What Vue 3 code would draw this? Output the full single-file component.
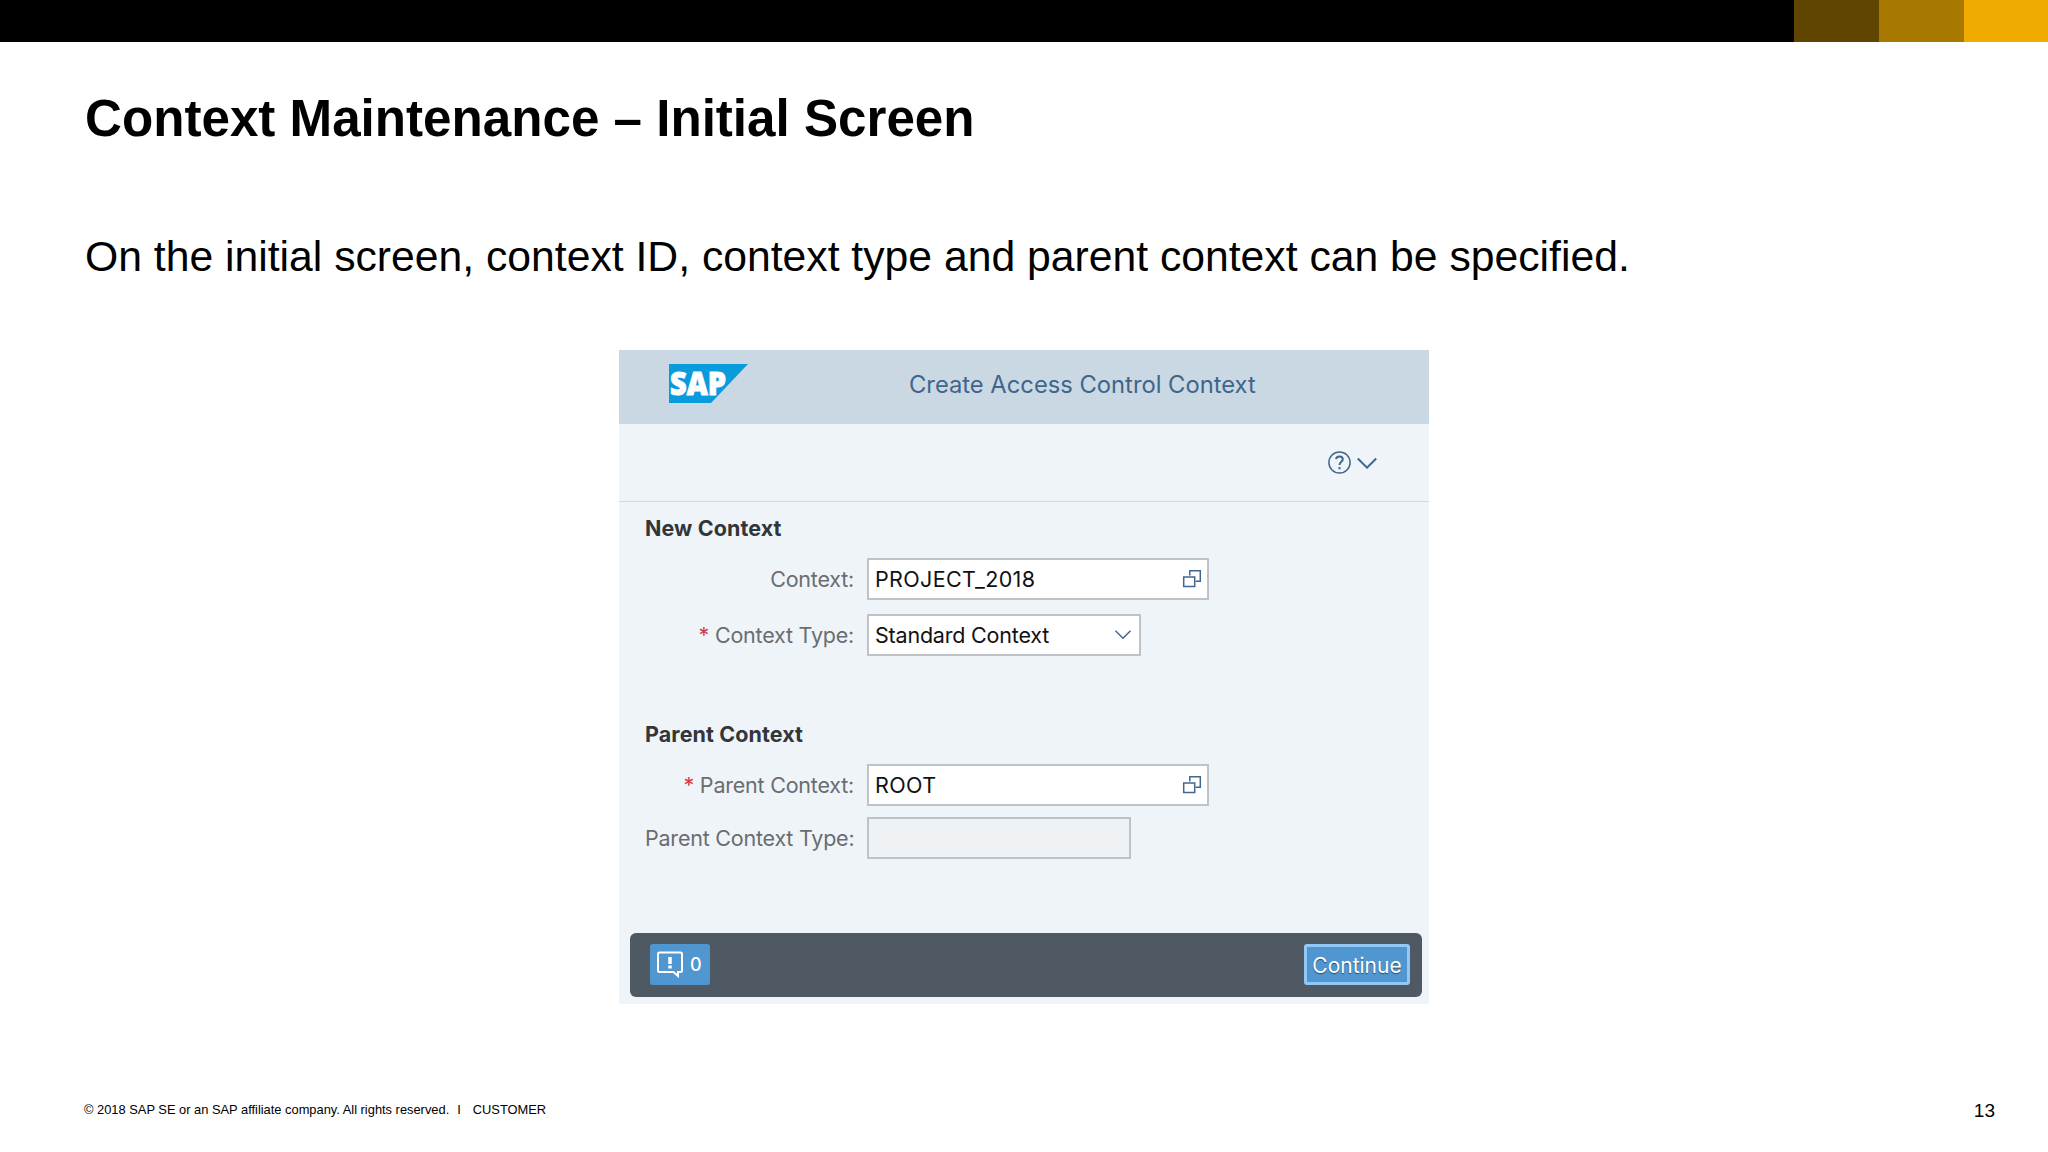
<template>
  <div class="slide">
    <div class="top-bar">
      <span class="swatch dark"></span>
      <span class="swatch mid"></span>
      <span class="swatch gold"></span>
    </div>

    <h1 class="title">Context Maintenance – Initial Screen</h1>
    <p class="lead">
      On the initial screen, context ID, context type and parent context can be
      specified.
    </p>

    <div class="panel">
      <header class="panel-header">
        <svg class="logo" width="80" height="39" viewBox="0 0 80 39">
          <path d="M0 0H79L42 39H0Z" fill="#0a9bdc" />
          <text x="1" y="31" textLength="56" lengthAdjust="spacingAndGlyphs">SAP</text>
        </svg>
        <span class="panel-title">Create Access Control Context</span>
      </header>

      <div class="toolbar">
        <svg width="24" height="24" viewBox="0 0 24 24">
          <circle cx="12.5" cy="11.5" r="10.6" />
          <path
            class="mark"
            d="M9.1 8.1C9.4 4.5 15.8 4.5 15.8 8.3C15.8 10.9 12.5 10.7 12.5 14.1M12.5 15.9V18.3"
          />
        </svg>
        <svg width="22" height="14" viewBox="0 0 22 14">
          <path class="chevron" d="M1.8 2.5L11 11.7L20.2 2.5" />
        </svg>
      </div>

      <section v-for="group in groups" :key="group.title" class="group">
        <h2>{{ group.title }}</h2>
        <div v-for="field in group.fields" :key="field.label" class="row">
          <label>
            <span v-if="field.required" class="star">*</span>
            {{ field.label }}:
          </label>
          <div class="field" :class="field.kind">
            <span>{{ field.value }}</span>
            <svg
              v-if="field.kind === 'search'"
              width="20"
              height="20"
              viewBox="0 0 20 20"
            >
              <path d="M7.8 6.5V1.7H18.3V12.3H13.5" />
              <rect x="1.7" y="8" width="11" height="9.5" />
            </svg>
            <svg
              v-if="field.kind === 'select'"
              width="18"
              height="12"
              viewBox="0 0 18 12"
            >
              <path d="M1.5 1.7L9 9.2L16.5 1.7" />
            </svg>
          </div>
        </div>
      </section>

      <footer class="action-bar">
        <button class="messages">
          <svg width="26" height="27" viewBox="0 0 26 27">
            <path
              d="M2.5 1.5H23.5Q25 1.5 25 3V19.5Q25 21 23.5 21H21V25L16.5 21H2.5Q1 21 1 19.5V3Q1 1.5 2.5 1.5Z"
            />
            <path class="bang" d="M13 6V13M13 14.6V17.6" />
          </svg>
          <span>0</span>
        </button>
        <button class="continue">Continue</button>
      </footer>
    </div>

    <div class="slide-footer">
      <span class="copyright">
        © 2018 SAP SE or an SAP affiliate company. All rights reserved.
      </span>
      <span class="divider">I</span>
      <span class="audience">CUSTOMER</span>
      <span class="page">13</span>
    </div>
  </div>
</template>

<script setup>
const groups = [
  {
    title: "New Context",
    fields: [
      { label: "Context", value: "PROJECT_2018", kind: "search" },
      {
        label: "Context Type",
        value: "Standard Context",
        kind: "select",
        required: true,
      },
    ],
  },
  {
    title: "Parent Context",
    fields: [
      { label: "Parent Context", value: "ROOT", kind: "search", required: true },
      { label: "Parent Context Type", value: "", kind: "disabled" },
    ],
  },
];
</script>

<style>
body {
  margin: 0;
  background: #fff;
}
</style>

<style scoped>
.slide {
  width: 2048px;
  height: 1152px;
  display: flex;
  flex-direction: column;
  overflow: hidden;
  background: #fff;
  color: #000;
  font-family: "Liberation Sans", Arial, sans-serif;
}

.slide * {
  box-sizing: border-box;
}

.top-bar {
  height: 42px;
  flex: none;
  display: flex;
  justify-content: flex-end;
  background: #000;
}

.swatch {
  width: 85px;
}
.swatch.dark {
  background: #604500;
}
.swatch.mid {
  background: #a87900;
}
.swatch.gold {
  width: 84px;
  background: #f0ab00;
}

.title {
  margin: 47px 0 0 85px;
  font-size: 51.15px;
  line-height: 60px;
  white-space: nowrap;
}

.lead {
  margin: 77px 0 0 85px;
  font-size: 42.7px;
  line-height: 60px;
  white-space: nowrap;
}

.panel {
  width: 810px;
  height: 654px;
  margin: 64px 0 0 619px;
  flex: none;
  display: flex;
  flex-direction: column;
  background: #eff4f9;
  font-family: Inter, "Liberation Sans", sans-serif;
  font-size: 21.5px;
}

.panel-header {
  height: 74px;
  flex: none;
  display: flex;
  align-items: flex-start;
  padding: 14px 0 0 50px;
  background: #cad8e4;
}

.logo {
  overflow: visible;
}
.logo text {
  font-family: "Open Sans", sans-serif;
  font-size: 32px;
  font-weight: 800;
  fill: #fff;
  stroke: #fff;
  stroke-width: 1;
}

.panel-title {
  margin-left: 160px;
  font-size: 23.75px;
  line-height: 42px;
  color: #3f6689;
  white-space: nowrap;
}

.toolbar {
  height: 78px;
  flex: none;
  display: flex;
  justify-content: flex-end;
  align-items: center;
  gap: 5px;
  padding-right: 51px;
  border-bottom: 1px solid #cfdae6;
}

svg {
  flex: none;
}
.toolbar svg,
.field svg {
  fill: none;
  stroke: #41678d;
  stroke-width: 1.5;
}
.toolbar .mark {
  stroke-width: 2;
}
.toolbar .chevron {
  stroke-width: 2;
}

.group {
  height: 206px;
  padding-left: 26px;
  flex: none;
}

.group h2 {
  margin: 0;
  height: 56px;
  padding-top: 11px;
  font-size: 21.5px;
  line-height: 30px;
  letter-spacing: 0.1px;
  color: #32363a;
}

.row {
  display: flex;
  align-items: center;
}
.row + .row {
  margin-top: 14px;
}
.group + .group .row + .row {
  margin-top: 11px;
}

label {
  width: 209px;
  margin-right: 13px;
  text-align: right;
  letter-spacing: -0.22px;
  color: #6a6d70;
  white-space: nowrap;
}

.star {
  color: #d33b46;
}

.field {
  width: 342px;
  height: 42px;
  display: flex;
  align-items: center;
  justify-content: space-between;
  padding: 0 5px 0 6px;
  border: 2px solid #bfc3c7;
  background: #fff;
  color: #111;
  letter-spacing: 0.35px;
}
.field.select {
  width: 274px;
  padding-right: 7px;
  letter-spacing: -0.2px;
}
.field.disabled {
  width: 264px;
  background: #eef2f5;
}

.action-bar {
  width: 792px;
  height: 64px;
  flex: none;
  display: flex;
  align-items: center;
  justify-content: space-between;
  margin: 19px 0 0 11px;
  padding: 0 12px 1px 20px;
  border-radius: 6px;
  background: #4e5964;
}

button {
  height: 41px;
  margin: 0;
  padding: 0;
  border: 0;
  border-radius: 3px;
  background: #5096d1;
  color: #fff;
  font-family: inherit;
  font-size: 21px;
}

.messages {
  width: 60px;
  display: flex;
  align-items: center;
  padding-left: 7px;
  gap: 7px;
  font-size: 18px;
  font-weight: 500;
}
.messages svg {
  fill: none;
  stroke: #fff;
  stroke-width: 2;
}
.messages .bang {
  stroke-width: 3.5;
}

.continue {
  width: 106px;
  padding-top: 1px;
  border: 3px solid #91c8f6;
  text-shadow: 0 1px 1px #2b4a68;
}

.slide-footer {
  display: flex;
  align-items: flex-start;
  margin-top: 94px;
  padding: 0 53px 0 84px;
  font-size: 12.87px;
  line-height: 24px;
  white-space: nowrap;
}
.divider {
  margin: 0 12px 0 8px;
}
.page {
  margin-left: auto;
  font-size: 19px;
  line-height: 26px;
}
</style>
